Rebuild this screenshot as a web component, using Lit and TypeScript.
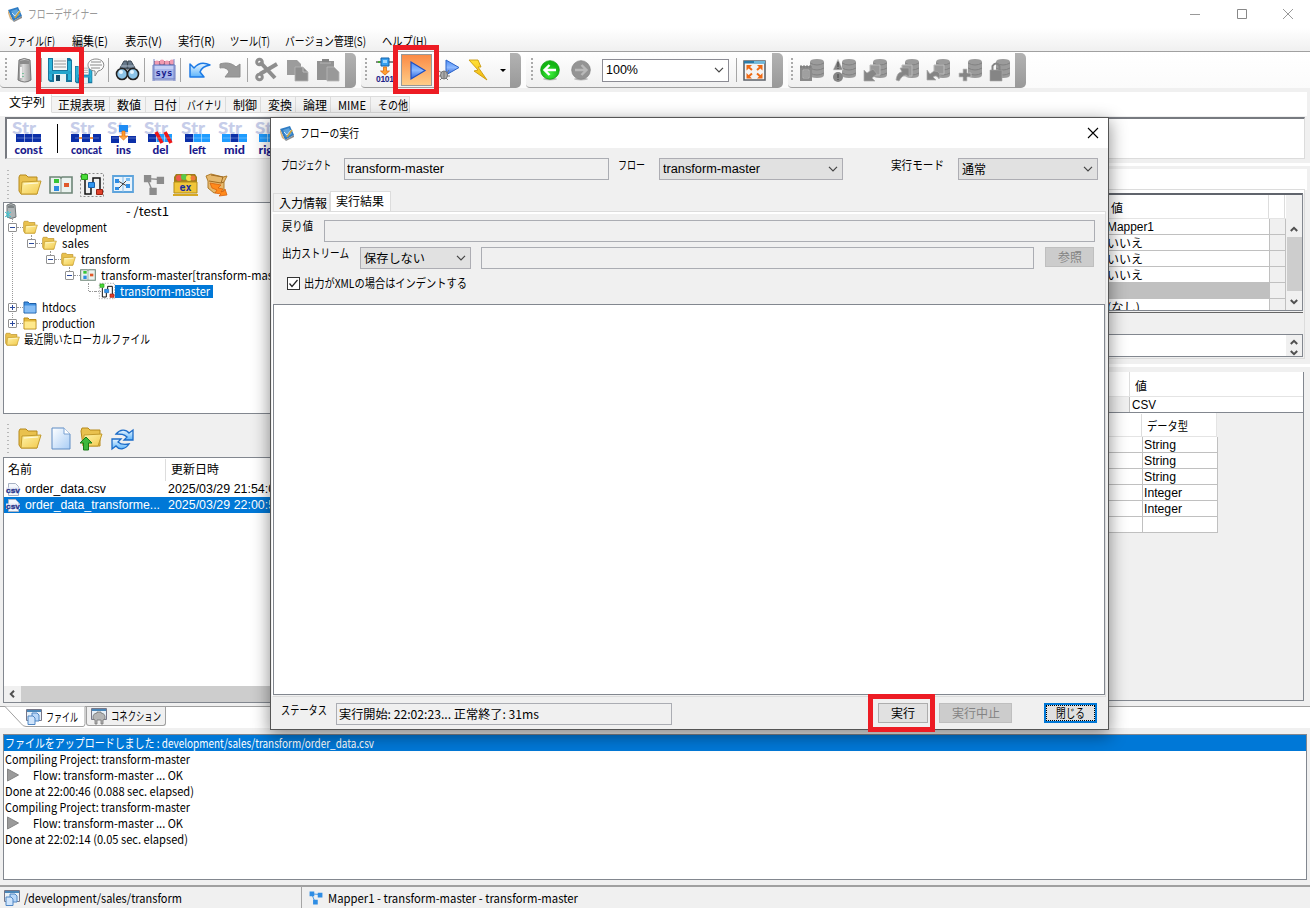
import { LitElement, html, svg, css } from "lit";
import type { TemplateResult } from "lit";
import { customElement, property } from "lit/decorators.js";
import { styleMap } from "lit/directives/style-map.js";

/** One line of text condensed or widened to a given advance width. */
@customElement("ui-text")
class UiText extends LitElement {
  static styles = css`
    :host { display: block; flex: none; height: 16px; line-height: 16px; white-space: pre; }
    span { display: inline-block; transform-origin: 0 50%; line-height: 16px; }
  `;
  @property({ type: Number }) w = 0;
  @property() text = "";
  render() {
    return html`<span>${this.text}</span>`;
  }
  updated() {
    const s = this.renderRoot.querySelector("span") as HTMLElement;
    s.style.transform = "none";
    const n = s.getBoundingClientRect().width;
    this.style.width = this.w + "px";
    if (n > 0) s.style.transform = `scaleX(${this.w / n})`;
  }
}

const T = (text: string, w: number, cls = "") => html`<ui-text class=${cls} .text=${text} .w=${w}></ui-text>`;
const box = (w: number, h: number, body: unknown, vb = `0 0 ${w} ${h}`, cls = "") =>
  html`<svg class="ic ${cls}" width=${w} height=${h} viewBox=${vb}>${body}</svg>`;
const at = (gap: number, item: unknown) =>
  html`<div class="at" style=${styleMap({ marginLeft: gap + "px" })}>${item}</div>`;

const appIcon = () => box(16, 16, svg`
  <path d="M1 4L11 1l4 9-9 5z" fill="#2f7cc4"/><path d="M1 4l5 11-3-2-2-6z" fill="#d9b27a"/>
  <path d="M6 15l9-5v2l-8 4z" fill="#8c8c8c"/><path d="M4 5l6-2 3 6-6 3z" fill="#5aa2dd"/>
  <path d="M5 7l3 3 4-5" stroke="#cfe4f8" fill="none"/><path d="M13 5l-5 7" stroke="#c9a23c" stroke-width="1.5"/>`);

const server = () => box(15, 25, svg`
  <path d="M2 2q5-3 11 0l1 20q-6 4-13 0z" fill="url(#gServer)" stroke="#777"/>
  <path d="M3 3q5-2 9 0v3H3z" fill="#8b8b8b"/><path d="M4 9v11" stroke="#f3f3f3" stroke-width="2"/><path d="M6 15v1m0 2v1" stroke="#2a6" />`);
const floppyBody = svg`
  <path d="M0 0h22l2 2v22H2l-2-2z" fill="#17759d"/><path d="M1 1h3v21H2l-1-1z" fill="#2ab2d8"/><path d="M20 3h3v19h-3z" fill="#2ab2d8"/>
  <path d="M5 0h14v12H5z" fill="#f6f6f6"/><path d="M6 3h12M6 6h12M6 9h12" stroke="#9a9a9a"/><path d="M1 13h22v3H1z" fill="#24a5cc"/>
  <path d="M6 16h12v8H6z" fill="#e6f2f5"/><path d="M8 17h4v6H8z" fill="#174a67"/>`;
const floppy = () => box(24, 24, floppyBody);
const saveNote = () => box(22, 25, svg`
  <g transform="translate(-8 8) scale(.72)">${floppyBody}</g>
  <path d="M13 1c10 0 10 11 2 12l-3 5 0-5C2 12 3 1 13 1z" fill="#fbfbfb" stroke="#888"/><path d="M8 4h10M7 7h12M8 10h9" stroke="#888"/>`);
const binocular = () => box(23, 21, svg`
  <path d="M4 8L8 1h3l1 8zM19 8l-4-7h-3l-1 8z" fill="#66788a" stroke="#3a4652"/><path d="M5 6h13" stroke="#a9b8c8"/>
  <circle cx="6" cy="14" r="5.5" fill="#8cc4e8" stroke="#222" stroke-width="1.6"/><circle cx="17" cy="14" r="5.5" fill="#8cc4e8" stroke="#222" stroke-width="1.6"/>
  <circle cx="5" cy="12" r="2" fill="#e8f6ff"/><circle cx="16" cy="12" r="2" fill="#e8f6ff"/>`);
const sysBox = () => box(24, 24, svg`
  <path d="M2 3h20v7H2z" fill="#8a5a78"/><g fill="#f29ab0"><circle cx="5" cy="5" r="2.4"/><circle cx="10" cy="4" r="2.4"/><circle cx="15" cy="5" r="2.4"/><circle cx="20" cy="4" r="2.4"/></g>
  <path d="M1 7h22v14H1z" fill="#a9b8ec" stroke="#6b7cc0"/><path d="M2 8h20v3H2z" fill="#c5d0f6"/><path d="M0 22h24M2 1v22M22 1v22" stroke="#7c8ac8"/>
  <text x="12" y="18" text-anchor="middle" font-family="DejaVu Sans Mono" font-weight="700" font-size="9" fill="#1a1f8c" textLength="17">sys</text>`);
const undo = () => box(22, 18, svg`
  <path d="M1 3l4 4C9 2 15 1 21 4c-6 1-9 4-10 7l4 5H1z" fill="url(#gBlue)" stroke="#1c7ae6" stroke-width="1.500" stroke-linejoin="round"/>`);
const redo = () => box(22, 18, svg`<path d="M21 3l-4 3C13 2 7 1 1 3v4c5-1 8 1 9 4l-4 5h15z" fill="#9a9a9a" stroke="#8e8e8e"/>`);
const cut = () => box(23, 24, svg`
  <g stroke="#8e8e8e" fill="none"><path d="M5 4l15 16" stroke-width="4"/><path d="M22 6L5 16" stroke-width="4"/>
  <circle cx="4.500" cy="4" r="2.800" stroke-width="3"/><circle cx="4.500" cy="19" r="2.800" stroke-width="3"/></g>`);
const copy = () => box(23, 23, svg`<path d="M1 1h10l4 4v11H1z" fill="#9c9c9c"/><path d="M9 8h8l5 5v9H9z" fill="#8e8e8e" stroke="#b5b5b5" stroke-width=".8"/><path d="M17 8v5h5" fill="none" stroke="#bbb"/>`);
const paste = () => box(24, 24, svg`<path d="M1 3h17v19H1z" fill="#939393"/><path d="M6 1h7v4H6z" fill="#858585"/><path d="M4 5h11" stroke="#b5b5b5"/><path d="M11 9h7l5 5v9H11z" fill="#999" stroke="#b8b8b8" stroke-width=".8"/>`);
const compile = () => box(18, 25, svg`
  <path d="M0 4h18" stroke="#111"/><path d="M5 0h8v8H5z" fill="#38a0f0" stroke="#1460a8"/><path d="M7 2h4v3H7z" fill="#9fd6ff"/><path d="M2 3h2v2H2z" fill="#4a3"/>
  <path d="M7.500 9h3v4h3l-4.500 4-4.500-4h3z" fill="#ffa030" stroke="#e06a10" stroke-width=".8"/>
  <text x="0" y="24" font-family="Liberation Sans" font-weight="700" font-size="8.500" fill="#1d2388" textLength="18">0101</text>`);
const play = () => box(16, 19, svg`<path d="M1 1l14 8.500L1 18z" fill="url(#gPlay)" stroke="#1d4fc4" stroke-width="1.2"/>`);
const debugPlay = () => box(22, 22, svg`
  <path d="M7 1l13 7.500L7 16z" fill="url(#gPlay)" stroke="#2a62c8"/>
  <g stroke="#777" fill="#aaa"><ellipse cx="5" cy="16" rx="3.500" ry="4"/><path d="M0 12l3 2M10 11l-2 3M-1 17h3M11 17H8M1 21l2-2M9 21l-2-2M5 12v8"/></g>`);
const bolt = () => box(20, 23, svg`<path d="M1 1h9l3 7h-3l9 13L6 12l4-1z" fill="url(#gBolt)" stroke="#c99a10" stroke-width=".9"/>`);
const circ = (l: boolean) => box(20, 21, svg`
  <ellipse cx="10" cy="19" rx="7" ry="1.500" fill="#bbb"/><circle cx="10" cy="10" r="9.300" fill=${l ? "url(#gGreen)" : "#949494"} stroke=${l ? "#129a12" : "#858585"} stroke-width=".8"/>
  <path d=${l ? "M16 10H5M9.500 5L4.500 10l5 5" : "M4 10h11M10.500 5l5 5-5 5"} stroke=${l ? "#fff" : "#b9b9b9"} stroke-width="2.400" fill="none"/>`);
const full = () => box(23, 21, svg`
  <path d="M1 1h21v19H1z" fill="#f3f3f3" stroke="#5d6268" stroke-width="1.600"/><path d="M1 1h21v2.500H1z" fill="#2a7ba8"/><path d="M11 1h11v2.500H11z" fill="#6fb9dc"/>
  <g fill="#ef6a14"><path d="M3.500 5H9L3.500 10.500zM19.500 5H14l5.500 5.500zM3.500 18.500H9L3.500 13zM19.500 18.500H14l5.500-5.500z"/></g>
  <path d="M5 6.500l4 3.500M18 6.500L14 10M5 17l4-3.500M18 17l-4-3.500" stroke="#ef6a14" stroke-width="2"/>`);
const chev = (c = "#444") => box(10, 6, svg`<path d="M1 .8l4 4 4-4" fill="none" stroke=${c} stroke-width="1.200"/>`);
const arrow = (up: boolean) => box(8, 6, svg`<path d=${up ? "M.8 5L4 1.800 7.200 5" : "M.8 1L4 4.200 7.200 1"} fill="none" stroke="#505050" stroke-width="2"/>`);

const dbOver: TemplateResult[] = [
  svg`<path d="M0 8h12v15H0z" fill="#8a8a8a"/><path d="M1 7v3m3-3v3m3-3v3m3-3v3" stroke="#777"/><path d="M3 12h6v8H3zM4 14h4M4 16h4M4 18h4" fill="none" stroke="#b5b5b5"/>`,
  svg`<path d="M6 1l5 11H1z" fill="#868686" stroke="#ddd" stroke-width=".6"/><circle cx="6" cy="19" r="5" fill="#868686"/><path d="M6 4v5m0 1v1M6 16v4m0 1v1" stroke="#555" stroke-width="1.400"/>`,
  svg`<path d="M7 7h10v10H7z" fill="#999" stroke="#bbb"/><path d="M1 12v11h11l-3-3 5-4-4-5-6 4z" fill="#858585" stroke="#aaa" stroke-width=".7"/>`,
  svg`<path d="M7 7h10v11H7z" fill="#999" stroke="#bbb"/><path d="M1 22C2 16 4 14 7 14l-2-4h9v9l-3-2c-3 0-5 3-7 6z" fill="#858585" stroke="#aaa" stroke-width=".7"/>`,
  svg`<path d="M8 7h10v9H8z" fill="#999" stroke="#bbb"/><path d="M1 12v10h9l-3-3q4-3 6 2 3-8-5-8l-4 3z" fill="#858585" stroke="#aaa" stroke-width=".7"/>`,
  svg`<path d="M5 11h4v4h4v4H9v4H5v-4H1v-4h4z" fill="#858585" stroke="#c5c5c5" stroke-width=".7"/>`,
  svg`<path d="M1 12h12v11H1z" fill="#858585" stroke="#aaa" stroke-width=".6"/><path d="M3.500 12V8q3.500-5 7 0v4" fill="none" stroke="#858585" stroke-width="2"/>`,
];
const db = (i: number) => {
  const x = i === 6 ? 7 : 10;
  return box(25, 25, svg`<g transform="translate(${x} 0)"><path d="M0 4q0-3 7-3t7 3v13q0 3-7 3T0 17z" fill="#9b9b9b"/><path d="M0 5q7 4 14 0M0 10q7 4 14 0M0 15q7 4 14 0" fill="none" stroke="#828282"/></g>${dbOver[i]}`);
};

const folderOpen = (s = 24) => box(s, s, svg`
  <path d="M1 4l1-2h6l2 2h9v17H3L1 18z" fill="#e9c14e" stroke="#b78a1c"/><path d="M4 9l19-1-4 13H3z" fill="url(#gFold)" stroke="#c29a2c"/><path d="M6 11l14-1" stroke="#fffbe0"/>`, "0 0 24 24");
const folder = (blue: boolean) => box(14, 14, svg`
  <path d="M1 2h4l1.500 1.500H13V13H1z" fill=${blue ? "#3f8fe0" : "#e5b93c"} stroke=${blue ? "#1d5ea8" : "#b78a1c"}/><path d="M1.500 5.500h11v7h-11z" fill=${blue ? "#86bdf5" : "#ffe98c"}/>`);
const project = (w: number, h: number) => box(w, h, svg`
  <path d="M1 2h10l1 1 1-1h10v16H1z" fill="#eaf2ee" stroke="#6d8577" stroke-width="1.600"/><path d="M12 3v15" stroke="#87988e"/>
  <path d="M5 4h5v4H5z" fill="#35c435"/><path d="M5 11h5v5H5z" fill="#2d8be0"/><path d="M15 8h5v4h-5z" fill="#e0592a"/>`, "0 0 24 20");
const flow = (w: number, h: number) => box(w, h, svg`
  <rect x=".5" y=".5" width="23" height="23" fill="none" stroke="#8a8a8a" stroke-dasharray="2 2"/>
  <path d="M5 7v14h6v-6M13 9V5h7v12" fill="none" stroke="#111" stroke-width="1.500"/>
  <path d="M1.500 1.500h6v5h-6z" fill="#49dc39" stroke="#279a1c"/><path d="M8.500 9.500h6v5h-6z" fill="#2f95ef" stroke="#145fae"/><path d="M16.500 16.500h6v5h-6z" fill="#e0402a" stroke="#9a2212"/>`, "0 0 24 24");
const mapper = () => box(22, 19, svg`
  <path d="M1 1h20v16H1z" fill="#e8f3fc" stroke="#5ea4dc" stroke-width="1.800"/><path d="M11 2v15" stroke="#8bbde5"/><path d="M6 6l9 5M6 14l9-9" stroke="#444"/>
  <path d="M3 4h4v4H3zM3 12h4v3H3zM14 9h4v4h-4z" fill="#2f8de4"/><path d="M14 3h4v3h-4z" fill="#79bdf2"/>`);
const nodes = (c: string, s: number) => box(s, s, svg`
  <path d="M5 5l14 1M5 6l5 12" stroke=${c} stroke-width="1.500"/><path d="M1 1h8v8H1zM15 3h8v8h-8zM7 15h8v8H7z" fill=${c}/>`, "0 0 24 24");
const exBox = () => box(25, 24, svg`
  <path d="M1 4l2-3h19l2 3v16H1z" fill="#a07c1c"/><g><circle cx="6" cy="5" r="3" fill="#ef5b4b"/><circle cx="11" cy="4" r="3" fill="#58c84a"/><circle cx="16" cy="5" r="3" fill="#f6e04a"/><circle cx="20" cy="5" r="2.500" fill="#ef7b3b"/></g>
  <path d="M1 9h23v11H1z" fill="#f0c63a" stroke="#b48d18"/><path d="M0 22h25" stroke="#d6a824" stroke-width="2"/>
  <text x="12.500" y="18" text-anchor="middle" font-family="DejaVu Sans Mono" font-weight="700" font-size="10" fill="#1a2c9c">ex</text>`);
const carton = () => box(23, 24, svg`
  <path d="M1 3l5-2 12 3 4-1-3 6v9l-10 2-6-5V8z" fill="#e6b86c" stroke="#b07c2c"/><path d="M4 8l12 2 3-1M6 2l12 2-2 6" fill="none" stroke="#a06c24"/><path d="M5 10l11 2-3 3 5 1-2 3 3-1 1-2 2 6-8 1 2-2-6-1 2-3-5-2z" fill="#ff8a1c" stroke="#d8620c" stroke-width=".8"/>`);
const page = () => box(20, 24, svg`<path d="M1 1h12l6 6v15H1z" fill="url(#gPage)" stroke="#5f8cc4"/><path d="M13 1v6h6" fill="#fff" stroke="#7aa2d2"/>`);
const upFolder = () => box(24, 24, svg`
  <path d="M2 4l1-3h6l2 2h10v16H4z" fill="#e9c14e" stroke="#b78a1c"/><path d="M5 8l18-1-4 12H5z" fill="url(#gFold)" stroke="#c29a2c"/>
  <path d="M7 10l6 6H9.500v7h-5v-7H1z" fill="#3cb83c" stroke="#187a18"/>`);
const refresh = () => box(23, 21, svg`
  <path d="M5 5C9 0 15 0 18 4l4-3v10h-9l3-3c-3-3-6-3-11-3z" fill="url(#gBlue)" stroke="#1c6cc8" stroke-width="1.300"/><path d="M18 15c-4 6-10 6-13 2l-4 3V10h9l-3 3c3 3 6 3 11 2z" fill="url(#gBlue)" stroke="#1c6cc8" stroke-width="1.300"/>`);
const csv = () => box(14, 15, svg`
  <path d="M2.500 1.500h7l3 3v9h-10z" fill="#f4f7fc" stroke="#a8b2c4"/><path d="M0 5.500h14v5.500H0z" fill="#e3e9f6"/><text x="7" y="10.500" text-anchor="middle" font-family="Liberation Sans" font-weight="700" font-size="8" fill="#27348b" stroke="#27348b" stroke-width=".3" textLength="14" lengthAdjust="spacingAndGlyphs">csv</text>`);
const srv = () => box(12, 16, svg`<path d="M2 2q4-3 8 0l1 12q-5 3-9 0z" fill="#aeb4b6" stroke="#707678"/><path d="M3 3q3-2 6 0v2H3z" fill="#7e8486"/><path d="M0 9l6 5M0 14l6-5M3 8v7" stroke="#37c9d6"/>`);
const files = () => box(16, 16, svg`
  <path d="M.5.500h15v11H.5z" fill="#e7f0f8" stroke="#778"/><path d="M1 1h14v2H1z" fill="#4a86b8"/><path d="M6 4h5l2 2v6H6z" fill="#b9d7f8" stroke="#4f86c4"/><path d="M2 7h5l2 2v6.500H2z" fill="#cfe4fb" stroke="#4f86c4"/>`);
const plug = () => box(16, 16, svg`
  <path d="M.5.500h15v11H.5z" fill="#e7f0f8" stroke="#778"/><path d="M1 1h14v2H1z" fill="#4a86b8"/><path d="M2 11V8q1-3 4-3V4h4v1q3 0 4 3v3l-2 1v4h-2v-4H6v4H4v-4z" fill="#b5b5b5" stroke="#777" stroke-width=".8"/>`);
const grayPlay = () => box(12, 14, svg`<path d="M.5 1l11 6-11 6z" fill="#9b9b9b" stroke="#858585"/>`);

const strBody: Record<string, TemplateResult> = {
  const: svg`<path d="M6 0h8v8H6zM14.500 0h8v8h-8zM23 0h8v8h-8z" fill="#0b2fa8"/>`,
  concat: svg`<path d="M8 4h22" stroke="#f07818" stroke-width="2"/><path d="M3 0h8v8H3zM14 0h8v8h-8zM25 0h8v8h-8z" fill="#0b2fa8"/>`,
  ins: svg`<path d="M6 1h8v7H6zM23 1h8v7h-8z" fill="#0b2fa8" transform="translate(0 1)"/><path d="M14-9h9v7h-9z" fill="#1e8cf4"/><path d="M17-3h3v5h3l-4.500 4-4.500-4h3z" fill="#ff9a2c" stroke="#d8640c" stroke-width=".6"/>`,
  del: svg`<path d="M6 0h8v8H6z" fill="#0b2fa8"/><path d="M14.500 0h8v8h-8zM23 0h7v8h-7z" fill="#1e9cff"/><path d="M14-2l6 11M23-2l6 11" stroke="#f01818" stroke-width="3.600"/>`,
  left: svg`<path d="M6 0h8v8H6z" fill="#0b2fa8"/><path d="M14.500 0h8v8h-8zM23 0h8v8h-8z" fill="#1e9cff"/>`,
  mid: svg`<path d="M14.500 0h8v8h-8z" fill="#0b2fa8"/><path d="M6 0h8v8H6zM23 0h8v8h-8z" fill="#1e9cff"/>`,
  right: svg`<path d="M23 0h8v8h-8z" fill="#0b2fa8"/><path d="M6 0h8v8H6zM14.500 0h8v8h-8z" fill="#1e9cff"/>`,
};
const strIcon = (n: string, lw: number) => box(37, 38, svg`
  <text x="2" y="14" font-family="Lato" font-weight="900" font-size="17" fill="#c6cde9" textLength="24" lengthAdjust="spacingAndGlyphs">Str</text>
  <g transform="translate(0 14)">${strBody[n]}<path d="M7 4h24" stroke="#fff" stroke-opacity=".3"/></g>
  <text x="18.500" y="33.500" text-anchor="middle" font-family="Lato" font-weight="900" font-size="12" fill="#1a1a8c" textLength=${lw} lengthAdjust="spacingAndGlyphs">${n}</text>`);

const sep = html`<i class="sep"></i>`;
const grip = html`<i class="grip"></i>`;

/** Tree rows: indent of the expander, its sign, the icon and the label. */
const tree = [
  { pad: 8, sign: "-", icon: folderOpen(15), text: "development", w: 64 },
  { pad: 27, sign: "-", icon: folderOpen(15), text: "sales", w: 27 },
  { pad: 46, sign: "-", icon: folderOpen(15), text: "transform", w: 49 },
  { pad: 65, sign: "-", icon: project(16, 14), text: "transform-master[transform-master]", w: 190 },
  { pad: 84, sign: "", icon: flow(16, 16), text: "transform-master", w: 90, sel: true },
  { pad: 8, sign: "+", icon: folder(true), text: "htdocs", w: 34 },
  { pad: 8, sign: "+", icon: folder(false), text: "production", w: 53 },
];

@customElement("app-root")
class AppRoot extends LitElement {
  static styles = css`
    :host { display: block; width: 1310px; height: 908px; overflow: hidden; position: relative; background: #f0f0f0;
      font: 12px "Noto Sans CJK JP", sans-serif; color: #000; }
    * { box-sizing: border-box; }
    .defs { position: absolute; width: 0; height: 0; }
    .ic { display: block; flex: none; overflow: visible; }
    .at { flex: none; display: flex; align-items: center; }
    .row { display: flex; align-items: center; }
    .col { display: flex; flex-direction: column; }
    .grow { flex: 1; }
    .ar { font-family: "Liberation Sans", sans-serif; font-size: 12.500px; }
    .app { height: 908px; }
    .title { height: 28px; background: #fff; padding: 0 17px 0 7px; }
    .title .name { margin-left: 5px; color: #999; }
    .win { gap: 36px; align-items: center; }
    .menu { height: 24px; background: linear-gradient(#fff, #f0f0f0); border-bottom: 1px solid #a0a0a0; padding: 3px 0 0 8px; }
    .tools { height: 36px; background: linear-gradient(#fff, #fbfbfb); }
    .group { height: 36px; flex: none; display: flex; align-items: center; background: linear-gradient(#fff, #f0f0f0); border-bottom: 1px solid #a0a0a0; border-radius: 4px 0 0 4px; padding-top: 1px; }
    .gend { width: 11px; height: 35px; flex: none; background: linear-gradient(#b2b2b2, #999); border-radius: 0 5px 5px 0; margin-right: 5px; }
    .sep { width: 1px; height: 24px; background: #a5a5a5; display: block; flex: none; }
    .grip { display: block; width: 2px; height: 24px; flex: none; background: repeating-linear-gradient(#aaa 0 2px, transparent 2px 4px); }
    .run { width: 31px; height: 32px; border: 1px solid #999; background: linear-gradient(#fb8a45, #ffcd88); display: flex; align-items: center; padding-left: 8px; }
    .caret { border: 3px solid transparent; border-top-color: #000; border-bottom: 0; }
    .combo { display: flex; align-items: center; justify-content: space-between; height: 22px; border: 1px solid #adadb3; background: #e1e1e1; padding: 0 4px 0 3px; flex: none; }
    .zoom { width: 127px; height: 23px; background: #fff; border-color: #8c8c94; padding-left: 3px; }
    .cats { height: 24px; margin-top: 4px; background: #fff; margin-right: 3px; padding-left: 3px; align-items: flex-end; padding-bottom: 3px; }
    .cat { height: 17px; border: 1px solid #dcdcdc; border-left: 0; background: #f3f3f3; display: flex; align-items: center; flex: none; padding-left: 7px; }
    .cat.on { height: 19px; background: #fff; border-color: #fff #dcdcdc #fff #fff; padding: 0 0 4px 6px; }
    .palette { height: 42px; margin: 1px 5px 0 5px; border: 1px solid #dcdcdc; border-top: 2px solid #777a80; border-left: 2px solid #777a80; background: #fff; flex: none; padding-left: 3px; align-items: center; }
    .bar { width: 1px; height: 29px; background: #000; flex: none; }
    .mid { height: 547px; flex: none; align-items: flex-start; }
    .left { width: 300px; height: 547px; flex: none; }
    .lt { height: 43px; flex: none; padding: 8px 0 0 7px; align-items: center; }
    .grip.tall { height: 30px; background: repeating-linear-gradient(#b8b8b8 0 1px, transparent 1px 4px); }
    .tree { height: 212px; flex: none; margin-left: 3px; border: 1px solid #82878f; background: #fff; overflow: hidden; padding-left: 1px; }
    .tr { height: 16px; flex: none; display: flex; align-items: center; position: relative; }
    .root ui-text { margin-left: 109px; }
    .ex { width: 9px; height: 9px; border: 1px solid #919191; background: #fff; flex: none; position: relative; border-radius: 1px; margin-left: -5px; }
    .ex::before, .ex.plus::after { content: ""; position: absolute; left: 1px; top: 3px; width: 5px; height: 1px; background: #2c4a9c; }
    .ex.plus::after { transform: rotate(90deg); }
    .dots { width: 6px; border-top: 1px dotted #999; flex: none; }
    .nodes { position: relative; }
    .trunk { position: absolute; left: 7px; top: 0; height: 105px; border-left: 1px dotted #999; }
    .stem { position: absolute; top: 0; height: 4px; border-left: 1px dotted #999; }
    .stem.long { height: 8px; }
    .lbl { margin-left: 1px; padding: 0 3px 0 4px; height: 13px; display: flex; align-items: center; }
    .lbl.sel { background: #0078d7; color: #fff; margin-left: 0; padding: 0 3px 0 5px; }
    .lt2 { height: 43px; flex: none; padding: 7px 0 0 7px; }
    .files { height: 246px; flex: none; margin-left: 3px; border: 1px solid #82878f; background: #fff; overflow: hidden; }
    .fh { height: 23px; flex: none; }
    .fh .c1 { width: 162px; height: 22px; border-right: 1px solid #ddd; padding: 2px 0 0 4px; }
    .fh .c2 { height: 22px; padding: 2px 0 0 5px; }
    .fr { height: 16px; padding-left: 2px; flex: none; }
    .fr.sel { background: #0078d7; color: #fff; }
    .fr .n { margin-left: 5px; }
    .hs { height: 16px; background: #cdcdcd; flex: none; }
    .hs div { width: 17px; height: 16px; background: #f0f0f0; display: flex; align-items: center; padding-left: 5px; }
    .right { margin-left: 700px; width: 310px; height: 547px; flex: none; padding-top: 4px; }
    .wl { height: 3px; background: #fff; flex: none; }
    .wl.second { margin-top: 5px; }
    .phead { height: 21px; margin: 3px 3px 0 0; background: #fff; flex: none; }
    .pbox { height: 170px; border: 1px solid #dcdcdc; border-left: 0; margin: -1px 5px 0 0; flex: none; padding: 3px 1px 0 0; background: linear-gradient(#fff 0 4px, #f0f0f0 4px); }
    .ptable { height: 118px; border: 1px solid #82878f; border-top: 2px solid #60646c; flex: none; overflow: hidden; align-items: stretch; display: flex; }
    .pt { flex: none; }
    .ph { height: 24px; background: #fff; border-bottom: 1px solid #e4e4e4; }
    .ph .a { width: 268px; height: 23px; border-right: 1px solid #ddd; padding: 5px 0 0 110px; }
    .ph .b { width: 16px; height: 23px; border-right: 1px solid #ddd; }
    .pr { height: 16px; }
    .pr .a { width: 269px; height: 16px; background: #fff; border: solid #c0c0c0; border-width: 0 1px 1px 0; padding-left: 106px; }
    .pr .b { width: 16px; height: 16px; border: solid #c0c0c0; border-width: 0 1px 1px 0; }
    .pr.sel .a { background: #c0c0c0; }
    .vs { width: 16px; margin-left: auto; align-items: center; padding-top: 31px; }
    .thumb { width: 15px; height: 54px; background: #cdcdcd; margin: 5px 0 8px; }
    .pnote { height: 23px; border: 1px solid #82878f; background: #fff; display: flex; justify-content: flex-end; }
    .pgap { height: 22px; border-top: 1px solid #666; margin-top: 1px; }
    .spin { width: 16px; background: #f0f0f0; display: flex; flex-direction: column; align-items: center; justify-content: space-between; padding: 4px 0 0; }
    .lower { margin: 5px 6px 0 0; height: 329px; border: 1px solid #82878f; border-width: 0 1px 1px 0; background: #f0f0f0; }
    .lh { height: 25px; background: #fff; border-bottom: 1px solid #e4e4e4; }
    .lh .a { width: 130px; height: 24px; border-right: 1px solid #ddd; }
    .lh .at, .sh .at { padding-top: 3px; }
    .lr { height: 16px; border-bottom: 1px solid #82878f; }
    .lr .a { width: 130px; height: 15px; border-right: 1px solid #c0c0c0; }
    .lr .b { background: #fff; flex: 1; height: 15px; padding-left: 2px; }
    .sh { width: 217px; height: 24px; background: #fff; border: 1px solid #e4e4e4; border-width: 0 1px 1px 0; }
    .sh .a { width: 142px; height: 22px; border-right: 1px solid #ddd; }
    .sr { width: 218px; height: 16px; background: #fff; border: solid #c0c0c0; border-width: 0 1px 1px 0; }
    .sr .a { width: 143px; height: 16px; border-right: 1px solid #c0c0c0; }
    .sr .at { padding-top: 1px; }
    .btabs { height: 22px; background: #fff; flex: none; align-items: flex-start; border-top: 1px solid #a0a0a0; }
    .t1 { width: 86px; height: 20px; flex: none; padding-left: 26px; position: relative; }
    .slant { position: absolute; left: 0; top: -1px; }
    .t1 .in { position: relative; }
    .t2 { width: 80px; height: 19px; border: 1px solid #a0a0a0; border-top: 0; border-radius: 0 0 3px 3px; background: #f0f0f0; padding-left: 4px; flex: none; }
    .log { height: 146px; margin: 6px 3px 0 3px; border: 1px solid #82878f; background: #fff; flex: none; }
    .lg { height: 16px; flex: none; padding-left: 1px; }
    .lg.sel { background: #0078d7; color: #fff; }
    .lg .ic { margin-right: 14px; margin-left: 2px; }
    .status { height: 22px; margin-top: 5px; border-top: 2px solid #a0a0a0; padding: 2px 0 0 4px; flex: none; }
    .dlg { position: absolute; left: 270px; top: 117px; width: 839px; height: 613px; border: 1px solid #555; background: #f0f0f0; box-shadow: 0 5px 16px 1px rgba(0,0,0,.42); }
    .dt { height: 30px; background: #fff; padding: 0 10px 0 8px; flex: none; }
    .dt .name { margin-left: 5px; }
    .d1 { height: 43px; flex: none; padding: 10px 0 0 10px; align-items: flex-start; }
    .field { height: 22px; border: 1px solid #abadb3; flex: none; display: flex; align-items: center; padding-left: 2px; }
    .up { margin-top: -1px; }
    .up2 { margin-top: -2px; }
    .dtabs { height: 20px; flex: none; align-items: flex-end; padding-left: 2px; }
    .dtab { height: 18px; border: 1px solid #dcdcdc; border-bottom: 0; padding: 0 0 0 5px; width: 57px; flex: none; }
    .dtab.on { height: 20px; width: 61px; background: #fff; padding-bottom: 2px; }
    .dp { height: 486px; margin: 0 2px 0 1px; border: 1px solid #dcdcdc; border-left: 1px solid #fff; flex: none; }
    .dp .w { height: 2px; background: #fff; flex: none; }
    .l1 { height: 33px; padding: 6px 0 0 9px; flex: none; align-items: flex-start; }
    .l2 { height: 27px; padding-left: 9px; flex: none; align-items: flex-start; }
    .l3 { height: 30px; padding: 3px 0 0 14px; flex: none; align-items: flex-start; }
    .chk { width: 13px; height: 13px; border: 1px solid #333; background: #fff; margin-right: 4px; padding: 1px 0 0 1px; flex: none; }
    .btn { height: 20px; border: 1px solid #adadad; background: #e1e1e1; flex: none; display: flex; align-items: center; justify-content: center; }
    .btn.off { background: #ccc; border-color: #bfbfbf; color: #838383; }
    .btn.def { border: 2px solid #0078d7; outline: 1px dotted #000; outline-offset: -3px; }
    .out { flex: 1; border: 1px solid #82878f; background: #fff; margin: 0 0 1px 0; }
    .ds { flex: 1; padding: 6px 0 0 10px; align-items: flex-start; }
    .mark { position: absolute; border: 5px solid #ed1c24; }
    .m1 { left: 36px; top: 47px; width: 48px; height: 47px; }
    .m2 { left: 393px; top: 45px; width: 46px; height: 49px; }
    .m3 { left: 868px; top: 694px; width: 67px; height: 38px; }
  `;

  private defs() {
    return html`<svg class="defs"><defs>
      <linearGradient id="gServer"><stop stop-color="#8a8a8a"/><stop offset=".4" stop-color="#dcdcdc"/><stop offset="1" stop-color="#999"/></linearGradient>
      <linearGradient id="gBlue" x2="0" y2="1"><stop stop-color="#eaf6ff"/><stop offset="1" stop-color="#5cb4fb"/></linearGradient>
      <linearGradient id="gPlay" x2="0" y2="1"><stop stop-color="#4c8df5"/><stop offset=".5" stop-color="#8db9ff"/><stop offset="1" stop-color="#2a62dd"/></linearGradient>
      <linearGradient id="gBolt" x2="0" y2="1"><stop stop-color="#ffe13a"/><stop offset="1" stop-color="#f3b70c"/></linearGradient>
      <radialGradient id="gGreen" cy=".7"><stop stop-color="#3df03d"/><stop offset="1" stop-color="#13b513"/></radialGradient>
      <linearGradient id="gFold" x2="1" y2="1"><stop stop-color="#fff3a8"/><stop offset="1" stop-color="#f2c94c"/></linearGradient>
      <linearGradient id="gPage" x2="1" y2="1"><stop stop-color="#fff"/><stop offset="1" stop-color="#a9cdf5"/></linearGradient>
    </defs></svg>`;
  }

  private tools() {
    return html`<div class="tools row">
      <div class="group">${at(5, grip)}${at(10, server())}${at(9, sep)}${at(6, floppy())}${at(11, saveNote())}${at(3, sep)}
        ${at(7, binocular())}${at(5, sep)}${at(7, sysBox())}${at(4, sep)}${at(8, undo())}${at(8, redo())}${at(6, sep)}${at(7, cut())}${at(8, copy())}${at(7, paste())}${at(5, "")}</div><i class="gend"></i>
      <div class="group">${at(4, grip)}${at(9, compile())}${at(7, html`<div class="run">${play()}</div>`)}${at(7, debugPlay())}${at(7, bolt())}${at(12, html`<i class="caret"></i>`)}${at(4, "")}</div><i class="gend"></i>
      <div class="group">${at(5, grip)}${at(7, circ(true))}${at(11, circ(false))}${at(11, html`<div class="combo zoom">${T("100%", 32, "ar")}${chev()}</div>`)}${at(7, sep)}${at(6, full())}${at(6, "")}</div><i class="gend"></i>
      <div class="group">${at(3, grip)}${[0, 1, 2, 3, 4, 5, 6].map((i) => at(i ? 6.5 : 7, db(i)))}${at(1, "")}</div><i class="gend"></i>
    </div>`;
  }

  private left() {
    return html`<div class="left col">
      <div class="lt row"><i class="grip tall"></i>${at(9, folderOpen(24))}${at(7, project(24, 20))}${at(7, flow(24, 24))}${at(8, mapper())}${at(9, nodes("#8c8c8c", 22))}${at(8, exBox())}${at(7, carton())}</div>
      <div class="tree col">
        <div class="tr root">${srv()}${T("- /test1", 43)}</div>
        <div class="nodes"><i class="trunk"></i>
        ${tree.map((r) => html`<div class="tr">${r.pad > 8 ? html`<i class="stem ${r.sign ? "" : "long"}" style=${styleMap({ left: r.pad - 1 + "px" })}></i>` : ""}${r.sign
          ? at(r.pad, html`<i class="ex ${r.sign === "+" ? "plus" : ""}"></i>`)
          : at(r.pad, html`<i class="dots"></i>`)}<i class="dots"></i>${at(r.sign ? 0 : -2, r.icon)}<div class="lbl ${r.sel ? "sel" : ""}">${T(r.text, r.w)}</div></div>`)}
        </div>
        <div class="tr">${folderOpen(15)}${at(4, T("最近開いたローカルファイル", 126))}</div>
      </div>
      <div class="lt2 row"><i class="grip tall"></i>${at(9, folderOpen(24))}${at(9, page())}${at(8, upFolder())}${at(8, refresh())}</div>
      <div class="files col">
        <div class="fh row"><div class="c1">${T("名前", 24)}</div><div class="c2">${T("更新日時", 48)}</div></div>
        <div class="fr row">${csv()}${T("order_data.csv", 81, "ar n")}${at(62, T("2025/03/29 21:54:00", 114, "ar"))}</div>
        <div class="fr row sel">${csv()}${T("order_data_transforme...", 135, "ar n")}${at(8, T("2025/03/29 22:00:50", 114, "ar"))}</div>
        <div class="grow"></div>
        <div class="hs"><div>${box(6, 8, svg`<path d="M5 .8L1.800 4 5 7.200" fill="none" stroke="#505050" stroke-width="2"/>`)}</div></div>
      </div>
    </div>`;
  }

  private right() {
    const types = ["String", "String", "String", "Integer", "Integer", ""];
    const tw: Record<string, number> = { String: 32, Integer: 38 };
    return html`<div class="right col">
      <div class="wl"></div><div class="phead"></div>
      <div class="pbox col">
        <div class="ptable"><div class="pt">
          <div class="ph row"><div class="a">${T("値", 12)}</div><div class="b"></div></div>
          <div class="pr row"><div class="a">${T("Mapper1", 47, "ar")}</div><div class="b"></div></div>
          ${[0, 1, 2].map(() => html`<div class="pr row"><div class="a">${T("いいえ", 36)}</div><div class="b"></div></div>`)}
          <div class="pr sel row"><div class="a"></div><div class="b"></div></div>
          <div class="pr row"><div class="a">${T("(なし)", 33)}</div><div class="b"></div></div>
        </div><div class="vs col">${arrow(true)}<div class="thumb"></div>${arrow(false)}</div></div>
        <div class="pgap"></div>
        <div class="pnote"><div class="spin">${arrow(true)}${arrow(false)}</div></div>
      </div>
      <div class="wl second"></div>
      <div class="lower">
        <div class="lh row"><div class="a"></div>${at(5, T("値", 12))}</div>
        <div class="lr row"><div class="a"></div><div class="b">${T("CSV", 24, "ar")}</div></div>
        <div class="sh row"><div class="a"></div>${at(5, T("データ型", 41))}</div>
        ${types.map((t) => html`<div class="sr row"><div class="a"></div>${at(1, t ? T(t, tw[t], "ar") : "")}</div>`)}
      </div>
    </div>`;
  }

  private dialog() {
    return html`<div class="dlg col">
      <div class="dt row">${appIcon()}${T("フローの実行", 59, "name")}<div class="grow"></div>${box(10, 10, svg`<path d="M0 0l10 10M10 0L0 10" stroke="#000" stroke-width="1.100"/>`)}</div>
      <div class="d1 row">${T("プロジェクト", 50, "up")}${at(13, html`<div class="field" style=${styleMap({ width: "265px" })}>${T("transform-master", 97, "ar")}</div>`)}
        ${at(9, T("フロー", 27, "up"))}${at(14, html`<div class="combo" style=${styleMap({ width: "184px" })}>${T("transform-master", 97, "ar")}${chev()}</div>`)}
        ${at(48, T("実行モード", 53, "up"))}${at(14, html`<div class="combo" style=${styleMap({ width: "140px" })}>${T("通常", 24)}${chev()}</div>`)}</div>
      <div class="dtabs row"><div class="dtab row">${T("入力情報", 48)}</div><div class="dtab on row">${T("実行結果", 48)}</div></div>
      <div class="dp col"><div class="w"></div>
        <div class="l1 row">${T("戻り値", 31, "up2")}${at(11, html`<div class="field" style=${styleMap({ width: "771px" })}></div>`)}</div>
        <div class="l2 row">${T("出力ストリーム", 67, "up2")}${at(11, html`<div class="combo" style=${styleMap({ width: "111px" })}>${T("保存しない", 61)}${chev()}</div>`)}
          ${at(10, html`<div class="field" style=${styleMap({ width: "553px" })}></div>`)}${at(11, html`<div class="btn off" style=${styleMap({ width: "49px" })}>${T("参照", 24)}</div>`)}</div>
        <div class="l3 row"><div class="chk">${box(9, 9, svg`<path d="M.5 4.500l2.500 3L8.500 1" fill="none" stroke="#222" stroke-width="1.200"/>`)}</div>${T("出力がXMLの場合はインデントする", 163, "up2")}</div>
        <div class="out"></div>
      </div>
      <div class="ds row">${T("ステータス", 46, "up")}${at(9, html`<div class="field" style=${styleMap({ width: "336px" })}>${T("実行開始: 22:02:23... 正常終了: 31ms", 200)}</div>`)}
        ${at(206, html`<div class="btn" style=${styleMap({ width: "50px" })}>${T("実行", 24)}</div>`)}${at(11, html`<div class="btn off" style=${styleMap({ width: "73px" })}>${T("実行中止", 48)}</div>`)}${at(32, html`<div class="btn def" style=${styleMap({ width: "53px" })}>${T("閉じる", 29)}</div>`)}</div>
    </div>`;
  }

  render() {
    const menus: [string, number, number][] = [["ファイル(F)", 0, 47], ["編集(E)", 17, 36], ["表示(V)", 17, 37], ["実行(R)", 16, 37], ["ツール(T)", 15, 40], ["バージョン管理(S)", 15, 81], ["ヘルプ(H)", 16, 45]];
    const cats: [string, number, number][] = [["正規表現", 58, 47], ["数値", 36, 24], ["日付", 34, 24], ["バイナリ", 46, 35], ["制御", 35, 24], ["変換", 35, 24], ["論理", 35, 24], ["MIME", 40, 28], ["その他", 39, 30]];
    const icons: [string, number][] = [["concat", 31], ["ins", 15], ["del", 16], ["left", 17], ["mid", 21], ["right", 26]];
    return html`${this.defs()}
      <div class="app col">
        <div class="title row">${appIcon()}${T("フローデザイナー", 70, "name")}<div class="grow"></div>
          <div class="win row">${box(11, 10, svg`<path d="M0 5.500h10" stroke="#999"/>`)}${box(10, 10, svg`<path d="M.5.500h9v9h-9z" fill="none" stroke="#888"/>`)}${box(10, 10, svg`<path d="M0 0l10 10M10 0L0 10" stroke="#999"/>`)}</div></div>
        <div class="menu row">${menus.map(([t, g, w]) => at(g, T(t, w)))}</div>
        ${this.tools()}
        <div class="cats row"><div class="cat on" style=${styleMap({ width: "49px" })}>${T("文字列", 36)}</div>
          ${cats.map(([t, w, tw], i) => html`<div class="cat" style=${styleMap({ width: w + "px", paddingLeft: (i ? 7 : 6) + "px" })}>${T(t, tw)}</div>`)}</div>
        <div class="palette row">${strIcon("const", 28)}${at(10, html`<div class="bar"></div>`)}${at(10, icons.map(([n, w]) => strIcon(n, w)))}</div>
        <div class="mid row">${this.left()}${this.right()}</div>
        <div class="btabs row">
          <div class="t1 row">${box(86, 22, svg`<path d="M0 .5h5l16 17q2 3 5 3h57q2 0 2-3V.5" fill="#fff" stroke="#a0a0a0"/>`, "0 0 86 22", "slant")}<div class="in row">${files()}${at(4, T("ファイル", 32))}</div></div>
          <div class="t2 row">${plug()}${at(4, T("コネクション", 50))}</div></div>
        <div class="log col">
          <div class="lg row sel">${T("ファイルをアップロードしました : development/sales/transform/order_data.csv", 369)}</div>
          <div class="lg row">${T("Compiling Project: transform-master", 185)}</div>
          <div class="lg row">${grayPlay()}${T("Flow: transform-master ... OK", 150)}</div>
          <div class="lg row">${T("Done at 22:00:46 (0.088 sec. elapsed)", 189)}</div>
          <div class="lg row">${T("Compiling Project: transform-master", 185)}</div>
          <div class="lg row">${grayPlay()}${T("Flow: transform-master ... OK", 150)}</div>
          <div class="lg row">${T("Done at 22:02:14 (0.05 sec. elapsed)", 183)}</div>
        </div>
        <div class="status row">${files()}${at(4, T("/development/sales/transform", 158))}${at(119, sep)}${at(7, nodes("#2f8de4", 14))}${at(5, T("Mapper1 - transform-master - transform-master", 250))}</div>
      </div>
      ${this.dialog()}
      <div class="mark m1"></div><div class="mark m2"></div><div class="mark m3"></div>`;
  }
}
